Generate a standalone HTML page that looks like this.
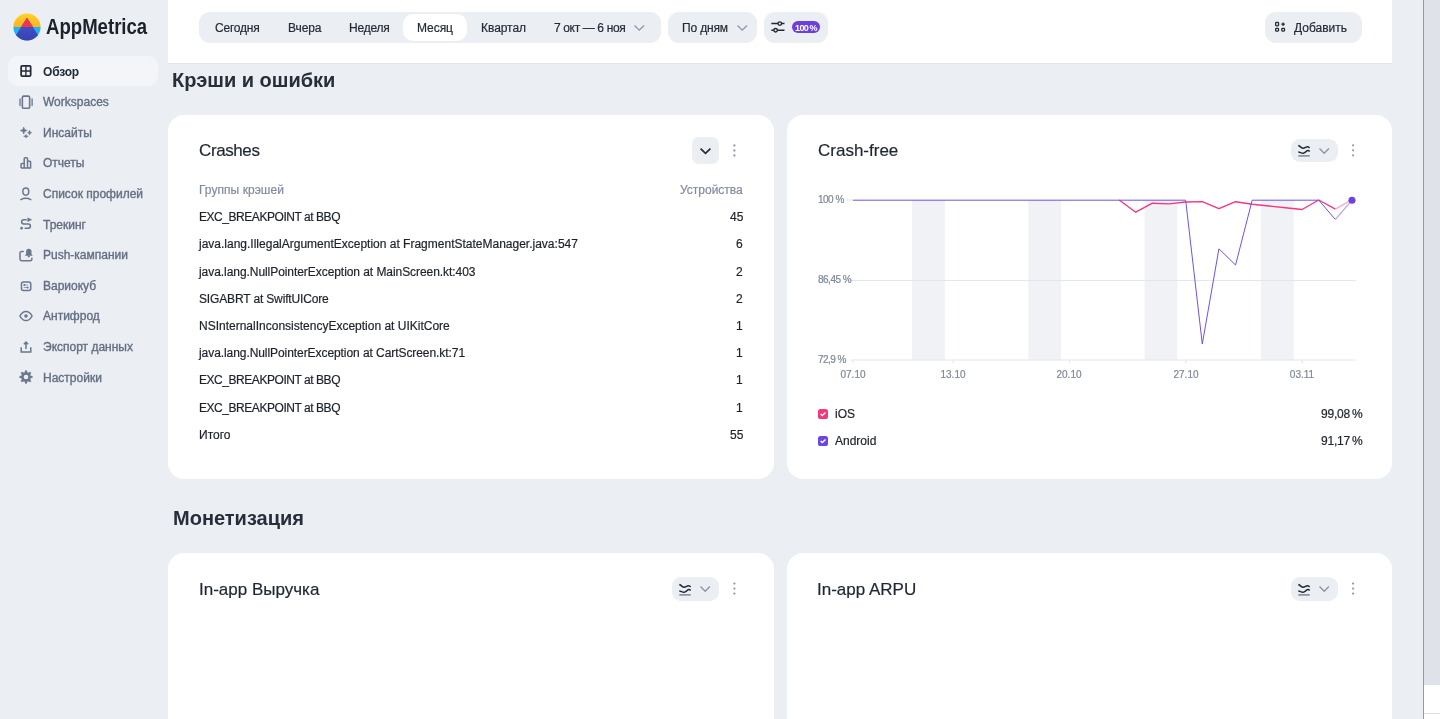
<!DOCTYPE html>
<html><head><meta charset="utf-8"><title>AppMetrica</title>
<style>
html,body{margin:0;padding:0;width:1440px;height:719px;overflow:hidden;background:#ebeef3;font-family:"Liberation Sans",sans-serif;}
.t{position:absolute;white-space:nowrap;will-change:transform;-webkit-text-stroke-width:0.2px;}
</style></head><body>
<div style="position:absolute;left:8px;top:56px;width:150px;height:30px;border-radius:10px;background:#f3f5f8"></div>
<svg style="position:absolute;left:13px;top:13px" width="28" height="28" viewBox="0 0 28 28">
<defs><clipPath id="lc"><circle cx="14" cy="14" r="13.6"/></clipPath>
<linearGradient id="ly" x1="0" y1="0" x2="0" y2="1"><stop offset="0" stop-color="#ffd42a"/><stop offset="1" stop-color="#ffb21e"/></linearGradient>
<linearGradient id="lb" x1="0" y1="0" x2="0" y2="1"><stop offset="0" stop-color="#3f5bd0"/><stop offset="1" stop-color="#3a3fb0"/></linearGradient></defs>
<g clip-path="url(#lc)">
<rect x="0" y="0" width="28" height="14" fill="url(#ly)"/>
<rect x="0" y="14" width="28" height="14" fill="#22b3f6"/>
<polygon points="14,4.8 28.8,28 -0.8,28" fill="url(#lb)"/>
<polygon points="14,4.8 19.9,14 8.1,14" fill="#f5334e"/>
</g></svg>
<div class="t" style="left:46px;top:12.70px;font-size:22.5px;line-height:27px;color:#1c212b;font-weight:bold;-webkit-text-stroke-width:0;"><span style="display:inline-block;transform:scaleX(0.826);transform-origin:0 0">AppMetrica</span></div>
<div class="t" style="left:42.5px;top:65.44px;font-size:12px;line-height:14px;color:#232936;font-weight:bold;-webkit-text-stroke-width:0;letter-spacing:-0.2px;">Обзор</div>
<div class="t" style="left:42.5px;top:95.07px;font-size:12px;line-height:14px;color:#636e81;-webkit-text-stroke:0.35px #636e81;">Workspaces</div>
<div class="t" style="left:42.5px;top:125.70px;font-size:12px;line-height:14px;color:#636e81;-webkit-text-stroke:0.35px #636e81;">Инсайты</div>
<div class="t" style="left:42.5px;top:156.33px;font-size:12px;line-height:14px;color:#636e81;-webkit-text-stroke:0.35px #636e81;">Отчеты</div>
<div class="t" style="left:42.5px;top:186.96px;font-size:12px;line-height:14px;color:#636e81;-webkit-text-stroke:0.35px #636e81;">Список профилей</div>
<div class="t" style="left:42.5px;top:217.59px;font-size:12px;line-height:14px;color:#636e81;-webkit-text-stroke:0.35px #636e81;">Трекинг</div>
<div class="t" style="left:42.5px;top:248.22px;font-size:12px;line-height:14px;color:#636e81;-webkit-text-stroke:0.35px #636e81;">Push-кампании</div>
<div class="t" style="left:42.5px;top:278.85px;font-size:12px;line-height:14px;color:#636e81;-webkit-text-stroke:0.35px #636e81;">Вариокуб</div>
<div class="t" style="left:42.5px;top:309.48px;font-size:12px;line-height:14px;color:#636e81;-webkit-text-stroke:0.35px #636e81;">Антифрод</div>
<div class="t" style="left:42.5px;top:340.11px;font-size:12px;line-height:14px;color:#636e81;-webkit-text-stroke:0.35px #636e81;">Экспорт данных</div>
<div class="t" style="left:42.5px;top:370.74px;font-size:12px;line-height:14px;color:#636e81;-webkit-text-stroke:0.35px #636e81;">Настройки</div>
<svg style="position:absolute;left:19.5px;top:65.10px;overflow:visible" width="12" height="12" viewBox="0 0 12 12"><rect x="1.15" y="0.9" width="9.5" height="10.1" rx="0.9" fill="none" stroke="#232936" stroke-width="1.75"/><path d="M5.9 1V11M1.2 5.95H10.6" stroke="#232936" stroke-width="1.35"/></svg>
<svg style="position:absolute;left:19.5px;top:95.73px;overflow:visible" width="12" height="12" viewBox="0 0 12 12"><rect x="2.35" y="0.1" width="7.3" height="12.2" rx="1.4" fill="none" stroke="#6b778c" stroke-width="1.6"/><path d="M0 2.9V9.5M12.1 2.9V9.5" stroke="#6b778c" stroke-width="1.3" stroke-linecap="round"/></svg>
<svg style="position:absolute;left:19.5px;top:126.36px;overflow:visible" width="12" height="12" viewBox="0 0 12 12"><path d="M3.70 1.00L4.74 3.46L7.20 4.50L4.74 5.54L3.70 8.00L2.66 5.54L0.20 4.50L2.66 3.46ZM9.60 4.30L10.22 5.99L11.70 6.70L10.22 7.41L9.60 9.10L8.98 7.41L7.50 6.70L8.98 5.99ZM6.00 8.30L6.71 9.64L8.40 10.20L6.71 10.76L6.00 12.10L5.29 10.76L3.60 10.20L5.29 9.64Z" fill="#6b778c" stroke="#6b778c" stroke-width="0.5" stroke-linejoin="round"/></svg>
<svg style="position:absolute;left:19.5px;top:156.99px;overflow:visible" width="12" height="12" viewBox="0 0 12 12"><path d="M1.05 11.1V7.3A0.8 0.8 0 0 1 1.85 6.5H4.2V11.1M4.2 11.1V1.7A1 1 0 0 1 5.2 0.7H6.5A1 1 0 0 1 7.5 1.7V11.1M7.5 11.1V4.3H9.8A0.8 0.8 0 0 1 10.6 5.1V11.1Z M1.05 11.1H10.6" fill="none" stroke="#6b778c" stroke-width="1.5" stroke-linejoin="round"/></svg>
<svg style="position:absolute;left:19.5px;top:187.62px;overflow:visible" width="12" height="12" viewBox="0 0 12 12"><ellipse cx="5.8" cy="3.6" rx="2.95" ry="3.6" fill="none" stroke="#6b778c" stroke-width="1.5"/><path d="M0.9 11.6 Q5.85 8.9 10.8 11.6" fill="none" stroke="#6b778c" stroke-width="1.5" stroke-linecap="round"/></svg>
<svg style="position:absolute;left:19.5px;top:218.25px;overflow:visible" width="12" height="12" viewBox="0 0 12 12"><path d="M6.2 1.7H3.8A2.15 2.15 0 0 0 3.8 6H8.3A2.1 2.1 0 0 1 8.3 10.2H5.2" fill="none" stroke="#6b778c" stroke-width="1.6" stroke-linecap="round"/><path d="M7.7 -0.3V3.7L11.7 1.7Z" fill="#6b778c" stroke="#6b778c" stroke-width="0.4" stroke-linejoin="round"/><circle cx="1.6" cy="10.2" r="1.35" fill="#6b778c"/></svg>
<svg style="position:absolute;left:19.5px;top:248.88px;overflow:visible" width="12" height="12" viewBox="0 0 12 12"><path d="M3.2 2.5H1.4A1.4 1.4 0 0 0 0 3.9V10.3A1.4 1.4 0 0 0 1.4 11.7H10.5A1.4 1.4 0 0 0 11.9 10.3V9.2" fill="none" stroke="#6b778c" stroke-width="1.5" stroke-linecap="round"/><path d="M6.1 5V2.4A2.7 2.7 0 0 1 11.5 2.4V5L12.7 6.8H4.9Z" fill="#6b778c"/><circle cx="8.8" cy="7.3" r="1.1" fill="#6b778c"/></svg>
<svg style="position:absolute;left:19.5px;top:279.51px;overflow:visible" width="12" height="12" viewBox="0 0 12 12"><rect x="1.45" y="1.95" width="9.3" height="8.5" rx="2" fill="none" stroke="#6b778c" stroke-width="1.5"/><path d="M3.7 5H8.2M3.7 7.5H8.2" stroke="#6b778c" stroke-width="0.9" opacity="0.75"/><circle cx="4.3" cy="5" r="1" fill="#6b778c"/><circle cx="7.6" cy="7.5" r="1" fill="#6b778c"/></svg>
<svg style="position:absolute;left:19.5px;top:310.14px;overflow:visible" width="12" height="12" viewBox="0 0 12 12"><path d="M-0.1 6C1.6 2.8 3.7 1.4 6 1.4C8.3 1.4 10.4 2.8 12.1 6C10.4 9.2 8.3 10.6 6 10.6C3.7 10.6 1.6 9.2 -0.1 6Z" fill="none" stroke="#6b778c" stroke-width="1.5"/><circle cx="6" cy="6" r="1.8" fill="#6b778c"/></svg>
<svg style="position:absolute;left:19.5px;top:340.77px;overflow:visible" width="12" height="12" viewBox="0 0 12 12"><path d="M1.2 6.3V10.9H10.8V6.3" fill="none" stroke="#6b778c" stroke-width="1.5"/><path d="M6 8V1.2M3.9 3.2L6 1.1L8.1 3.2" fill="none" stroke="#6b778c" stroke-width="1.5"/></svg>
<svg style="position:absolute;left:19.5px;top:371.40px;overflow:visible" width="12" height="12" viewBox="0 0 12 12"><path d="M5.48 -0.48L6.52 -0.48L7.61 2.12L10.21 1.05L10.95 1.79L9.88 4.39L12.48 5.48L12.48 6.52L9.88 7.61L10.95 10.21L10.21 10.95L7.61 9.88L6.52 12.48L5.48 12.48L4.39 9.88L1.79 10.95L1.05 10.21L2.12 7.61L-0.48 6.52L-0.48 5.48L2.12 4.39L1.05 1.79L1.79 1.05L4.39 2.12Z" fill="#6b778c" stroke="#6b778c" stroke-width="0.4" stroke-linejoin="round"/><circle cx="6" cy="6" r="2.3" fill="#ebeef3"/></svg>
<div style="position:absolute;left:168px;top:0;width:1224px;height:63px;background:#fff;border-bottom:1px solid #dfe4ec"></div>
<div style="position:absolute;left:199px;top:12px;width:462px;height:30.5px;border-radius:11px;background:#ebeef3"></div>
<div style="position:absolute;left:403px;top:14px;width:63.5px;height:27px;border-radius:10px;background:#fff"></div>
<div class="t" style="left:214.5px;top:20.84px;font-size:12px;line-height:14px;color:#252b36;letter-spacing:-0.2px;">Сегодня</div>
<div class="t" style="left:287.8px;top:20.84px;font-size:12px;line-height:14px;color:#252b36;letter-spacing:-0.1px;">Вчера</div>
<div class="t" style="left:348.9px;top:20.84px;font-size:12px;line-height:14px;color:#252b36;letter-spacing:-0.2px;">Неделя</div>
<div class="t" style="left:417.2px;top:20.84px;font-size:12px;line-height:14px;color:#252b36;letter-spacing:-0.05px;">Месяц</div>
<div class="t" style="left:480.6px;top:20.84px;font-size:12px;line-height:14px;color:#252b36;letter-spacing:-0.05px;">Квартал</div>
<div class="t" style="left:553.75px;top:20.84px;font-size:12px;line-height:14px;color:#252b36;letter-spacing:-0.36px;">7 окт — 6 ноя</div>
<svg style="position:absolute;left:634.3px;top:24.6px;overflow:visible" width="10.5" height="5.5"><path d="M0.5 0.5L5.25 5.2L10.0 0.5" fill="none" stroke="#8b95a7" stroke-width="1.3"/></svg>
<div style="position:absolute;left:668px;top:12px;width:89px;height:30.5px;border-radius:11px;background:#ebeef3"></div>
<div class="t" style="left:681.7px;top:20.84px;font-size:12px;line-height:14px;color:#252b36;letter-spacing:-0.15px;">По дням</div>
<svg style="position:absolute;left:736.8px;top:24.6px;overflow:visible" width="10.5" height="5.5"><path d="M0.5 0.5L5.25 5.2L10.0 0.5" fill="none" stroke="#8b95a7" stroke-width="1.3"/></svg>
<div style="position:absolute;left:764px;top:12px;width:64px;height:30.5px;border-radius:11px;background:#ebeef3"></div>
<svg style="position:absolute;left:771px;top:21px;overflow:visible" width="14" height="12" viewBox="0 0 14 12"><path d="M0.3 2.6H13.5M0.3 9.3H13.5" stroke="#232936" stroke-width="1.5"/><circle cx="8.8" cy="2.6" r="1.75" fill="#ebeef3" stroke="#232936" stroke-width="1.4"/><circle cx="4.6" cy="9.3" r="1.75" fill="#ebeef3" stroke="#232936" stroke-width="1.4"/></svg>
<div style="position:absolute;left:792.2px;top:21.2px;width:28px;height:11.8px;border-radius:6px;background:#6a3fdd"></div>
<div class="t" style="left:792.2px;top:22.9px;width:28px;height:11.8px;color:#fff;font-size:9px;font-weight:bold;line-height:11.8px;text-align:center;letter-spacing:-0.6px;-webkit-text-stroke-width:0">100<span style="letter-spacing:-1.2px"> </span>%</div>
<div style="position:absolute;left:1265px;top:12px;width:97px;height:30.5px;border-radius:11px;background:#ebeef3"></div>
<svg style="position:absolute;left:1275px;top:22.2px;overflow:visible" width="10" height="10" viewBox="0 0 10 10"><rect x="0.65" y="0.45" width="2.9" height="3.4" rx="0.8" fill="none" stroke="#232936" stroke-width="1.3"/><rect x="0.65" y="6.45" width="2.9" height="2.7" rx="0.8" fill="none" stroke="#232936" stroke-width="1.3"/><rect x="6.75" y="6.45" width="2.8" height="2.7" rx="0.8" fill="none" stroke="#232936" stroke-width="1.3"/><path d="M8.1 0.4V4M6.3 2.2H9.9" stroke="#232936" stroke-width="1.3"/></svg>
<div class="t" style="left:1294.3px;top:20.54px;font-size:12px;line-height:14px;color:#252b36;">Добавить</div>
<div style="position:absolute;left:1424px;top:0;width:16px;height:685px;background:#dfe2e8"></div>
<div style="position:absolute;left:1424px;top:685px;width:16px;height:34px;background:#fff"></div>
<div style="position:absolute;left:1424px;top:712.5px;width:16px;height:1px;background:#dedede"></div>
<div style="position:absolute;left:1422.8px;top:0;width:1.5px;height:719px;background:#3ec992"></div>
<div class="t" style="left:172.3px;top:68.07px;font-size:20px;line-height:24px;color:#272e3a;font-weight:bold;-webkit-text-stroke-width:0;">Крэши и ошибки</div>
<div style="position:absolute;left:168px;top:114.5px;width:606px;height:364.5px;border-radius:16px;background:#fff"></div>
<div style="position:absolute;left:787px;top:114.5px;width:605px;height:364.5px;border-radius:16px;background:#fff"></div>
<div class="t" style="left:198.6px;top:140.61px;font-size:17px;line-height:20px;color:#1f2633;letter-spacing:-0.4px;">Crashes</div>
<div style="position:absolute;left:692px;top:137px;width:27px;height:27px;border-radius:7px;background:#ebeef3"></div>
<svg style="position:absolute;left:700px;top:147.5px;overflow:visible" width="11" height="6"><path d="M0.6 0.6L5.5 5.4L10.4 0.6" fill="none" stroke="#262c38" stroke-width="1.7"/></svg>
<svg style="position:absolute;left:731px;top:142px;overflow:visible" width="6" height="16"><circle cx="3.40" cy="3.50" r="1.15" fill="#8f9bb0"/><circle cx="3.40" cy="8.50" r="1.15" fill="#8f9bb0"/><circle cx="3.40" cy="13.50" r="1.15" fill="#8f9bb0"/></svg>
<div class="t" style="left:199px;top:182.74px;font-size:12px;line-height:14px;color:#828c9f;letter-spacing:0.05px;">Группы крэшей</div>
<div class="t" style="right:697px;top:182.74px;font-size:12px;line-height:14px;color:#828c9f;text-align:right;">Устройства</div>
<div class="t" style="left:199px;top:210.14px;font-size:12px;line-height:14px;color:#1d222b;letter-spacing:-0.45px;-webkit-text-stroke:0.2px #1d222b;">EXC_BREAKPOINT at BBQ</div>
<div class="t" style="right:697px;top:210.14px;font-size:12px;line-height:14px;color:#1d222b;text-align:right;-webkit-text-stroke:0.2px #1d222b;">45</div>
<div class="t" style="left:199px;top:237.34px;font-size:12px;line-height:14px;color:#1d222b;letter-spacing:0px;-webkit-text-stroke:0.2px #1d222b;">java.lang.IllegalArgumentException at FragmentStateManager.java:547</div>
<div class="t" style="right:697px;top:237.34px;font-size:12px;line-height:14px;color:#1d222b;text-align:right;-webkit-text-stroke:0.2px #1d222b;">6</div>
<div class="t" style="left:199px;top:264.54px;font-size:12px;line-height:14px;color:#1d222b;letter-spacing:-0.06px;-webkit-text-stroke:0.2px #1d222b;">java.lang.NullPointerException at MainScreen.kt:403</div>
<div class="t" style="right:697px;top:264.54px;font-size:12px;line-height:14px;color:#1d222b;text-align:right;-webkit-text-stroke:0.2px #1d222b;">2</div>
<div class="t" style="left:199px;top:291.74px;font-size:12px;line-height:14px;color:#1d222b;letter-spacing:-0.15px;-webkit-text-stroke:0.2px #1d222b;">SIGABRT at SwiftUICore</div>
<div class="t" style="right:697px;top:291.74px;font-size:12px;line-height:14px;color:#1d222b;text-align:right;-webkit-text-stroke:0.2px #1d222b;">2</div>
<div class="t" style="left:199px;top:318.94px;font-size:12px;line-height:14px;color:#1d222b;letter-spacing:0px;-webkit-text-stroke:0.2px #1d222b;">NSInternalInconsistencyException at UIKitCore</div>
<div class="t" style="right:697px;top:318.94px;font-size:12px;line-height:14px;color:#1d222b;text-align:right;-webkit-text-stroke:0.2px #1d222b;">1</div>
<div class="t" style="left:199px;top:346.14px;font-size:12px;line-height:14px;color:#1d222b;letter-spacing:-0.07px;-webkit-text-stroke:0.2px #1d222b;">java.lang.NullPointerException at CartScreen.kt:71</div>
<div class="t" style="right:697px;top:346.14px;font-size:12px;line-height:14px;color:#1d222b;text-align:right;-webkit-text-stroke:0.2px #1d222b;">1</div>
<div class="t" style="left:199px;top:373.34px;font-size:12px;line-height:14px;color:#1d222b;letter-spacing:-0.45px;-webkit-text-stroke:0.2px #1d222b;">EXC_BREAKPOINT at BBQ</div>
<div class="t" style="right:697px;top:373.34px;font-size:12px;line-height:14px;color:#1d222b;text-align:right;-webkit-text-stroke:0.2px #1d222b;">1</div>
<div class="t" style="left:199px;top:400.54px;font-size:12px;line-height:14px;color:#1d222b;letter-spacing:-0.45px;-webkit-text-stroke:0.2px #1d222b;">EXC_BREAKPOINT at BBQ</div>
<div class="t" style="right:697px;top:400.54px;font-size:12px;line-height:14px;color:#1d222b;text-align:right;-webkit-text-stroke:0.2px #1d222b;">1</div>
<div class="t" style="left:199px;top:427.74px;font-size:12px;line-height:14px;color:#1d222b;letter-spacing:0px;-webkit-text-stroke:0.2px #1d222b;">Итого</div>
<div class="t" style="right:697px;top:427.74px;font-size:12px;line-height:14px;color:#1d222b;text-align:right;-webkit-text-stroke:0.2px #1d222b;">55</div>
<div class="t" style="left:818px;top:140.51px;font-size:17px;line-height:20px;color:#1f2633;">Crash-free</div>
<div style="position:absolute;left:1290.6px;top:138.75px;width:47px;height:23.5px;border-radius:9px;background:#ebeef3"></div>
<svg style="position:absolute;left:1298.0px;top:145.25px;overflow:visible" width="12" height="12" viewBox="0 0 12 12"><path d="M0.3 0.5C2.5 1.2 3.5 3.4 5.2 3.3C7 3.2 8.2 1.6 9.6 1.8C10.6 1.9 11.3 2.6 11.7 2.9M0.3 7C2 7 3.5 8.6 5.2 8.3C7 8 8.5 5.6 10 5.6C10.8 5.6 11.3 6.1 11.7 6.5" fill="none" stroke="#232936" stroke-width="1.5"/><path d="M0.3 10.9H11.7" stroke="#6f7480" stroke-width="1.3"/></svg>
<svg style="position:absolute;left:1319.0px;top:148.05px;overflow:visible" width="10.4" height="5.6"><path d="M0.5 0.5L5.2 5.3L9.9 0.5" fill="none" stroke="#8b95a7" stroke-width="1.3"/></svg>
<svg style="position:absolute;left:1350px;top:142px;overflow:visible" width="6" height="16"><circle cx="3.10" cy="3.30" r="1.15" fill="#8f9bb0"/><circle cx="3.10" cy="8.30" r="1.15" fill="#8f9bb0"/><circle cx="3.10" cy="13.30" r="1.15" fill="#8f9bb0"/></svg>
<svg style="position:absolute;left:0;top:0" width="1440" height="719"><rect x="912" y="200" width="32.8" height="160" fill="#f1f2f6"/><rect x="1028.3" y="200" width="32.8" height="160" fill="#f1f2f6"/><rect x="1144.6" y="200" width="32.8" height="160" fill="#f1f2f6"/><rect x="1260.9" y="200" width="32.8" height="160" fill="#f1f2f6"/><path d="M846 280.5H1356M850 360H1356" stroke="#e4e6ee" stroke-width="1"/><path d="M846 200H853" stroke="#e8e9ef" stroke-width="1.3"/><path d="M853 360.5V363" stroke="#dfe2ea" stroke-width="1"/><path d="M953 360.5V363" stroke="#dfe2ea" stroke-width="1"/><path d="M1069.4 360.5V363" stroke="#dfe2ea" stroke-width="1"/><path d="M1185.8 360.5V363" stroke="#dfe2ea" stroke-width="1"/><path d="M1302.2 360.5V363" stroke="#dfe2ea" stroke-width="1"/><path d="M1119.13 200 L1135.76 212.2 L1152.39 203.2 L1169.03 203.9 L1185.66 202 L1202.29 201.6 L1218.93 208.6 L1235.56 201.7 L1252.19 204.25 L1268.83 206 L1285.46 207.7 L1302.09 209.5 L1318.72 200 L1335.36 209.1" fill="none" stroke="#f5367f" stroke-width="1.4" stroke-linejoin="round"/><path d="M1335.36 209.1 L1351.99 199.6" fill="none" stroke="#fbaac9" stroke-width="1.3"/><path d="M853.00 200.2 L1185.66 200.2 L1202.29 344 L1218.93 248.8 L1235.56 265 L1252.19 200.2 L1318.72 200.2 L1335.36 219.5" fill="none" stroke="#7250e4" stroke-width="1.0" stroke-linejoin="round"/><path d="M1335.36 219.5 L1351.99 200.2" fill="none" stroke="#b9a6f2" stroke-width="1.2"/><circle cx="1351.99" cy="200.2" r="3.5" fill="#6a43dc"/></svg>
<div class="t" style="left:818.3px;top:194.13px;font-size:10px;line-height:12px;color:#7d8799;letter-spacing:-0.5px;">100 %</div>
<div class="t" style="left:818.3px;top:274.34px;font-size:10px;line-height:12px;color:#7d8799;letter-spacing:-0.5px;">86,45 %</div>
<div class="t" style="left:818.3px;top:353.94px;font-size:10px;line-height:12px;color:#7d8799;letter-spacing:-0.55px;">72,9 %</div>
<div class="t" style="left:753px;width:200px;top:368.64px;font-size:10px;line-height:12px;color:#7d8799;text-align:center;">07.10</div>
<div class="t" style="left:853px;width:200px;top:368.64px;font-size:10px;line-height:12px;color:#7d8799;text-align:center;">13.10</div>
<div class="t" style="left:969.4000000000001px;width:200px;top:368.64px;font-size:10px;line-height:12px;color:#7d8799;text-align:center;">20.10</div>
<div class="t" style="left:1085.8px;width:200px;top:368.64px;font-size:10px;line-height:12px;color:#7d8799;text-align:center;">27.10</div>
<div class="t" style="left:1202.2px;width:200px;top:368.64px;font-size:10px;line-height:12px;color:#7d8799;text-align:center;">03.11</div>
<svg style="position:absolute;left:818px;top:409px" width="10" height="10" viewBox="0 0 10 10"><rect width="10" height="10" rx="2.6" fill="#f5367f"/><path d="M2.6 5.1L4.3 6.6L7.5 3.5" fill="none" stroke="#fff" stroke-width="1.4"/></svg>
<div class="t" style="left:835px;top:407.04px;font-size:12px;line-height:14px;color:#21262f;">iOS</div>
<div class="t" style="right:78px;top:407.04px;font-size:12px;line-height:14px;color:#21262f;text-align:right;letter-spacing:-0.2px;">99,08<span style="letter-spacing:-1.4px"> </span>%</div>
<svg style="position:absolute;left:818px;top:436.2px" width="10" height="10" viewBox="0 0 10 10"><rect width="10" height="10" rx="2.6" fill="#6c46e2"/><path d="M2.6 5.1L4.3 6.6L7.5 3.5" fill="none" stroke="#fff" stroke-width="1.4"/></svg>
<div class="t" style="left:835px;top:434.24px;font-size:12px;line-height:14px;color:#21262f;">Android</div>
<div class="t" style="right:78px;top:434.24px;font-size:12px;line-height:14px;color:#21262f;text-align:right;letter-spacing:-0.2px;">91,17<span style="letter-spacing:-1.4px"> </span>%</div>
<div class="t" style="left:172.7px;top:506.47px;font-size:20px;line-height:24px;color:#272e3a;font-weight:bold;-webkit-text-stroke-width:0;">Монетизация</div>
<div style="position:absolute;left:168px;top:553px;width:606px;height:200px;border-radius:16px;background:#fff"></div>
<div style="position:absolute;left:787px;top:553px;width:605px;height:200px;border-radius:16px;background:#fff"></div>
<div class="t" style="left:198.9px;top:579.51px;font-size:17px;line-height:20px;color:#1f2633;">In-app Выручка</div>
<div style="position:absolute;left:671.7px;top:577px;width:47px;height:23.5px;border-radius:9px;background:#ebeef3"></div>
<svg style="position:absolute;left:679.1px;top:583.5px;overflow:visible" width="12" height="12" viewBox="0 0 12 12"><path d="M0.3 0.5C2.5 1.2 3.5 3.4 5.2 3.3C7 3.2 8.2 1.6 9.6 1.8C10.6 1.9 11.3 2.6 11.7 2.9M0.3 7C2 7 3.5 8.6 5.2 8.3C7 8 8.5 5.6 10 5.6C10.8 5.6 11.3 6.1 11.7 6.5" fill="none" stroke="#232936" stroke-width="1.5"/><path d="M0.3 10.9H11.7" stroke="#6f7480" stroke-width="1.3"/></svg>
<svg style="position:absolute;left:700.1px;top:586.3px;overflow:visible" width="10.4" height="5.6"><path d="M0.5 0.5L5.2 5.3L9.9 0.5" fill="none" stroke="#8b95a7" stroke-width="1.3"/></svg>
<svg style="position:absolute;left:731px;top:580px;overflow:visible" width="6" height="16"><circle cx="3.40" cy="3.60" r="1.15" fill="#8f9bb0"/><circle cx="3.40" cy="8.60" r="1.15" fill="#8f9bb0"/><circle cx="3.40" cy="13.60" r="1.15" fill="#8f9bb0"/></svg>
<div class="t" style="left:817px;top:579.51px;font-size:17px;line-height:20px;color:#1f2633;">In-app ARPU</div>
<div style="position:absolute;left:1290.6px;top:577px;width:47px;height:23.5px;border-radius:9px;background:#ebeef3"></div>
<svg style="position:absolute;left:1298.0px;top:583.5px;overflow:visible" width="12" height="12" viewBox="0 0 12 12"><path d="M0.3 0.5C2.5 1.2 3.5 3.4 5.2 3.3C7 3.2 8.2 1.6 9.6 1.8C10.6 1.9 11.3 2.6 11.7 2.9M0.3 7C2 7 3.5 8.6 5.2 8.3C7 8 8.5 5.6 10 5.6C10.8 5.6 11.3 6.1 11.7 6.5" fill="none" stroke="#232936" stroke-width="1.5"/><path d="M0.3 10.9H11.7" stroke="#6f7480" stroke-width="1.3"/></svg>
<svg style="position:absolute;left:1319.0px;top:586.3px;overflow:visible" width="10.4" height="5.6"><path d="M0.5 0.5L5.2 5.3L9.9 0.5" fill="none" stroke="#8b95a7" stroke-width="1.3"/></svg>
<svg style="position:absolute;left:1350px;top:580px;overflow:visible" width="6" height="16"><circle cx="3.10" cy="3.60" r="1.15" fill="#8f9bb0"/><circle cx="3.10" cy="8.60" r="1.15" fill="#8f9bb0"/><circle cx="3.10" cy="13.60" r="1.15" fill="#8f9bb0"/></svg>
</body></html>
